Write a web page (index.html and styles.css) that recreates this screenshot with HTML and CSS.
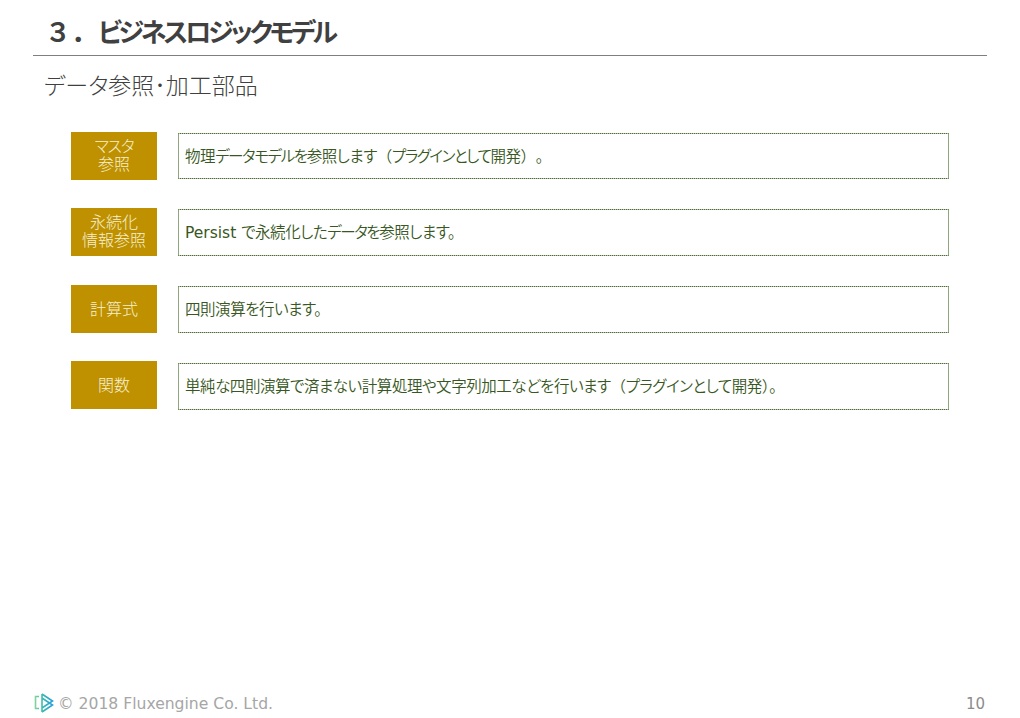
FILE: index.html
```html
<!DOCTYPE html>
<html lang="ja">
<head>
<meta charset="utf-8">
<title>ビジネスロジックモデル</title>
<link rel="stylesheet" href="styles.css">
</head>
<body>
<div class="slide">
  <header class="head">
    <h1 class="title"><span class="num">３．</span>ビジネスロジックモデル</h1>
  </header>
  <h2 class="subtitle">データ参照･加工部品</h2>
  <main class="rows">
    <section class="row">
      <div class="label"><span><span class="kana">マスタ</span><br>参照</span></div>
      <div class="desc desc-a"><span class="line">物理<span class="kana">データモデルを</span>参照します<span class="full">（</span><span class="kana">プラグインとして</span>開発<span class="full">）</span><span class="full tail">。</span></span></div>
    </section>
    <section class="row">
      <div class="label"><span>永続化<br>情報参照</span></div>
      <div class="desc desc-b"><span class="line"><span class="latin">Persist </span>で永続化した<span class="kana">データを</span>参照します。</span></div>
    </section>
    <section class="row row-shift">
      <div class="label label-one"><span>計算式</span></div>
      <div class="desc desc-b"><span class="line">四則演算を行います。</span></div>
    </section>
    <section class="row">
      <div class="label label-one"><span>関数</span></div>
      <div class="desc desc-c"><span class="line">単純な四則演算で済まない計算処理や文字列加工などを行います<span class="full">（</span>プラグインとして開発<span class="full">）</span>。</span></div>
    </section>
  </main>
  <footer class="foot">
    <div class="brand">
      <svg class="logo" width="20" height="20" viewBox="0 0 20 20" fill="none">
        <defs><linearGradient id="lg" x1="0" y1="0" x2="1" y2="0"><stop offset="0" stop-color="#7fd29a"/><stop offset="0.45" stop-color="#35b8b0"/><stop offset="1" stop-color="#2b9fd8"/></linearGradient></defs>
        <path d="M5 3.5H1.5V15.5H5M8 1V19M8 1L18.5 8L8 15M8 5L18.5 12L8 19" stroke="url(#lg)" stroke-width="1.6"/>
      </svg>
      <span class="copy">© 2018 Fluxengine Co. Ltd.</span>
    </div>
    <span class="page">10</span>
  </footer>
</div>
</body>
</html>
```
FILE: styles.css
```css
* { box-sizing: border-box; }
html, body { margin: 0; padding: 0; background: #fff; }
.slide {
  width: 1020px;
  height: 718px;
  display: flex;
  flex-direction: column;
  font-family: "DejaVu Sans", "Noto Sans CJK JP", sans-serif;
  font-feature-settings: "palt";
  color: #404040;
  overflow: hidden;
}
.head {
  margin: 0 33px;
  height: 56px;
  border-bottom: 1px solid #7f7f7f;
  padding: 14px 0 0 12px;
}
.title {
  margin: 0;
  font-size: 26px;
  line-height: 38px;
  font-weight: 700;
  letter-spacing: -3.1px;
  display: flex;
}
.num { width: 53px; letter-spacing: 0; font-feature-settings: normal; }
.subtitle {
  margin: 13px 0 0 44px;
  font-size: 23px;
  line-height: 34px;
  font-weight: 300;
  height: 34px;
}
.rows {
  margin: 29px 0 0 71px;
  display: flex;
  flex-direction: column;
  gap: 28px;
  flex: 1;
}
.row { display: flex; gap: 21px; align-items: flex-start; }
.row-shift { margin-top: 1px; }
.label {
  width: 86px;
  height: 48px;
  background: #bf9000;
  color: #f5f1d0;
  font-size: 16px;
  line-height: 18px;
  font-weight: 300;
  display: flex;
  align-items: center;
  justify-content: center;
  text-align: center;
}
.label-one { padding-top: 2px; }
.desc {
  width: 771px;
  display: flex;
  align-items: center;
  padding: 0 6px 3px;
  font-size: 15.5px;
  font-weight: 350;
  color: #385723;
  background: linear-gradient(#fff, #fff) padding-box, #b5c4a8 border-box;
  border-style: dotted solid;
  border-width: 1px;
  border-color: #4d6b38 #8fa67f;
}
.line { letter-spacing: -0.45px; }
.latin { letter-spacing: 0; font-weight: 400; }
.kana { letter-spacing: -1.4px; }
.full { font-feature-settings: normal; }
.tail { margin-left: 8px; }
.desc-a { height: 46px; margin-top: 1px; }
.desc-b { height: 47px; margin-top: 1px; }
.desc-c { height: 47px; margin-top: 2px; }
.foot {
  height: 29px;
  margin: 0 35px 1px 34px;
  display: flex;
  justify-content: space-between;
  align-items: center;
  color: #a6a6a6;
  font-feature-settings: normal;
}
.brand { display: flex; align-items: center; gap: 4px; }
.logo { display: block; }
.copy { font-size: 15.6px; padding-top: 2px; }
.page { font-size: 15px; color: #8c8c8c; padding-top: 2px; }
```
